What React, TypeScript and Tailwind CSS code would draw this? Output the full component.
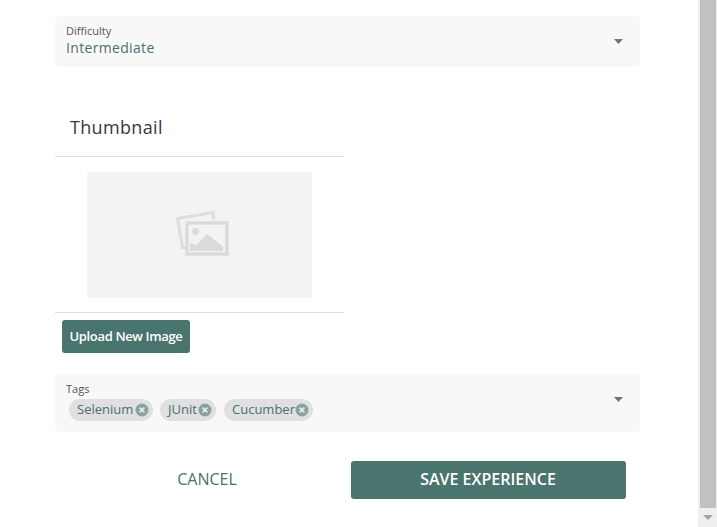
import React from 'react';

function Caret() {
  return (
    <svg width="9" height="5" viewBox="0 0 10 5" preserveAspectRatio="none" className="absolute right-[17px] top-[23px]">
      <path d="M0 0h10L5 5z" fill="#757575" />
    </svg>
  );
}

function Chip({ label, width }: { label: string; width: string }) {
  return (
    <span className={`flex h-[22px] items-center justify-between rounded-full bg-[#e0e0e0] pl-[8px] pr-[4px] text-[13px] text-[#4c6e74] ${width}`}>
      {label}
      <svg width="14" height="14" viewBox="0 0 14 14">
        <circle cx="7" cy="7" r="6.5" fill="#8ba19f" />
        <path d="M4.6 4.6l4.8 4.8M9.4 4.6l-4.8 4.8" stroke="#e8ecec" strokeWidth="1.6" />
      </svg>
    </span>
  );
}

export default function App() {
  return (
    <div className="flex h-[527px] w-[717px] overflow-hidden bg-white font-['Open_Sans',sans-serif]">
      <div className="w-[698px] shrink-0 pl-[55px] pt-[16px]">
        <div className="relative h-[51px] w-[585px] rounded-[5px] bg-[#f8f8f8] pl-[11px] pt-[8px]">
          <div className="text-[11px] leading-[14px] text-[#555555]">Difficulty</div>
          <div className="text-[14px] leading-[19px] tracking-[0.33px] text-[#4c6e74]">Intermediate</div>
          <Caret />
        </div>

        <div className="mt-[37px] h-[53px] w-[289px] border-b border-[#e0e0e0] pl-[15px] pt-[11px] text-[18px] leading-[25px] tracking-[0.33px] text-[#333a40]">
          Thumbnail
        </div>

        <div className="w-[289px] border-b border-[#e0e0e0] pb-[14px] pl-[32px] pt-[15px]">
          <div className="flex h-[126px] w-[225px] items-center justify-center rounded-[3px] bg-[#f3f3f3]">
            <svg width="54" height="46" viewBox="0 0 54 46" fill="none" className="ml-[4px] mt-[-4px]">
              <path d="M11 37.5H7.5L2.5 8.5 38 2.5l1 7" stroke="#dedede" strokeWidth="3" />
              <rect x="12" y="13" width="40" height="31" stroke="#dadada" strokeWidth="3.4" />
              <circle cx="20.5" cy="21.5" r="3.4" fill="#dadada" />
              <path d="M15 41v-8l6 2.5 11-11.5 16 12.5v4.500z" fill="#dadada" />
            </svg>
          </div>
        </div>

        <button className="ml-[7px] mt-[7px] block h-[33px] w-[128px] rounded-[3px] bg-[#4a746e] text-center text-[13px] font-semibold tracking-[-0.36px] text-white">
          Upload New Image
        </button>

        <div className="relative mt-[21px] h-[58px] w-[585px] rounded-[5px] bg-[#f8f8f8] pl-[11px] pt-[8px]">
          <div className="text-[11px] leading-[14px] text-[#555555]">Tags</div>
          <div className="ml-[3px] mt-[3px] flex gap-[7px]">
            <Chip label="Selenium" width="w-[84px]" />
            <Chip label="JUnit" width="w-[56px]" />
            <div className="ml-[1px]">
              <Chip label="Cucumber" width="w-[89px]" />
            </div>
          </div>
          <Caret />
        </div>

        <div className="mt-[29px] flex items-center">
          <button className="w-[296px] pl-[8px] pb-[3px] text-center text-[16px] text-[#4c6e74]">CANCEL</button>
          <button className="h-[38px] w-[275px] rounded-[3px] bg-[#4a746e] pb-[2px] pr-[1px] text-center text-[16px] font-semibold text-white">
            SAVE EXPERIENCE
          </button>
        </div>
      </div>

      <div className="flex w-[19px] shrink-0 flex-col bg-[#efefef] pl-[2px] pr-[1px]">
        <div className="h-[508px] bg-[#c1c1c1]" />
        <div className="flex flex-1 items-center justify-center">
          <svg width="10" height="5" viewBox="0 0 10 5">
            <path d="M0 0h10L5 5z" fill="#a3a3a3" />
          </svg>
        </div>
      </div>
    </div>
  );
}
